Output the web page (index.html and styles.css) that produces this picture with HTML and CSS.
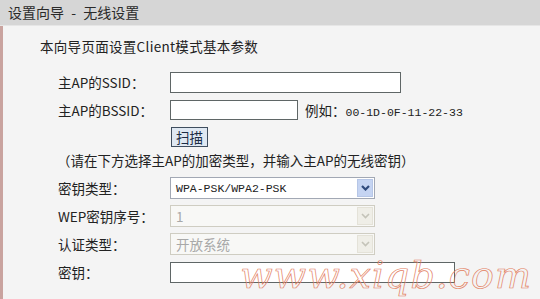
FILE: index.html
```html
<!DOCTYPE html>
<html lang="zh-CN">
<head>
    <meta charset="UTF-8">
    <title>设置向导 - 无线设置</title>
    <link rel="stylesheet" href="styles.css">
</head>
<body>
    <div class="title-bar">设置向导 - 无线设置</div>
    <div class="panel">
        <p class="intro">本向导页面设置Client模式基本参数</p>
        <div class="form">
            <label class="label">主AP的SSID：</label>
            <div class="field"><input type="text" class="text-box ssid"></div>

            <label class="label">主AP的BSSID：</label>
            <div class="field">
                <input type="text" class="text-box bssid">
                <span class="hint">例如：<span class="mono">00-1D-0F-11-22-33</span></span>
            </div>

            <span></span>
            <div class="field field-short"><button class="scan-btn">扫描</button></div>

            <div class="note">（请在下方选择主AP的加密类型，并输入主AP的无线密钥）</div>

            <label class="label">密钥类型：</label>
            <div class="field">
                <div class="select">
                    <span class="select-value mono">WPA-PSK/WPA2-PSK</span>
                    <span class="select-arrow">
                        <svg width="9" height="6" viewBox="0 0 9 6"><path d="M1 1 L4.5 4.5 L8 1" fill="none" stroke="#2f4a7c" stroke-width="2.2"/></svg>
                    </span>
                </div>
            </div>

            <label class="label">WEP密钥序号：</label>
            <div class="field">
                <div class="select disabled">
                    <span class="select-value">1</span>
                    <span class="select-arrow">
                        <svg width="9" height="6" viewBox="0 0 9 6"><path d="M1 1 L4.5 4.5 L8 1" fill="none" stroke="#c4c3b8" stroke-width="1.6"/></svg>
                    </span>
                </div>
            </div>

            <label class="label">认证类型：</label>
            <div class="field">
                <div class="select disabled">
                    <span class="select-value">开放系统</span>
                    <span class="select-arrow">
                        <svg width="9" height="6" viewBox="0 0 9 6"><path d="M1 1 L4.5 4.5 L8 1" fill="none" stroke="#c4c3b8" stroke-width="1.6"/></svg>
                    </span>
                </div>
            </div>

            <label class="label">密钥：</label>
            <div class="field"><input type="text" class="text-box key"></div>
        </div>
        <div class="watermark">www.xiqb.com</div>
    </div>
</body>
</html>
```

FILE: styles.css
```css
body {
    margin: 0;
    background-color: #f4f4f4;
    font-family: "Noto Sans CJK SC", sans-serif;
    font-size: 13.5px;
    color: #222;
    height: 299px;
    overflow: hidden;
}
.title-bar {
    height: 25px;
    line-height: 24px;
    padding-left: 8px;
    background-color: #d6d6d6;
    border-bottom: 1px solid #e6e6e6;
    color: #2a2a2a;
    font-size: 14px;
    word-spacing: 4px;
}
.panel {
    position: relative;
    height: 273px;
    border-left: 3px solid #c9a39f;
}
.intro {
    margin: 0;
    padding: 10px 0 0 37px;
    line-height: 20px;
    letter-spacing: 0.3px;
}
.form {
    display: grid;
    grid-template-columns: 112px auto;
    padding: 12px 0 0 55px;
}
.label {
    height: 28px;
    line-height: 28px;
}
.field {
    display: flex;
    align-items: center;
    height: 28px;
}
.field-short {
    height: 26px;
    align-items: flex-start;
}
.text-box {
    box-sizing: border-box;
    height: 21px;
    margin: 0;
    border: 1px solid #5f6666;
    background: #fff;
}
.ssid {
    width: 231px;
}
.bssid {
    width: 128px;
    height: 20px;
}
.key {
    width: 285px;
}
.hint {
    margin-left: 7px;
}
.mono {
    font-family: "Liberation Mono", monospace;
    font-size: 11.5px;
}
.scan-btn {
    margin: 3px 0 0 1px;
    padding: 0 4px;
    height: 20px;
    line-height: 17px;
    font-family: inherit;
    font-size: 13.5px;
    color: #1c2c44;
    background-color: #dfe8f2;
    border: 1px solid #3f4d5e;
}
.note {
    grid-column: 1 / 3;
    height: 24px;
    line-height: 20px;
    margin-left: -1px;
}
.select {
    box-sizing: border-box;
    display: flex;
    align-items: center;
    width: 205px;
    height: 22px;
    padding: 1px;
    border: 1px solid #a2a8b4;
    background: #fff;
}
.select-value {
    flex: 1;
    padding-left: 4px;
}
.select-arrow {
    display: flex;
    align-items: center;
    justify-content: center;
    width: 16px;
    height: 18px;
    background-color: #c5d4f2;
    border: 1px solid #b6c6e6;
    box-sizing: border-box;
}
.select.disabled {
    border-color: #cfcdc2;
    background: #f8f8f6;
    color: #a8a8a8;
}
.select.disabled .select-arrow {
    background-color: #efeee7;
    border-color: #e4e2d8;
}
.watermark {
    position: absolute;
    right: 8px;
    bottom: 2px;
    font-family: "DejaVu Serif", serif;
    font-style: italic;
    font-size: 38px;
    letter-spacing: 1px;
    color: transparent;
    -webkit-text-stroke: 0.7px #e3805f;
}
```
